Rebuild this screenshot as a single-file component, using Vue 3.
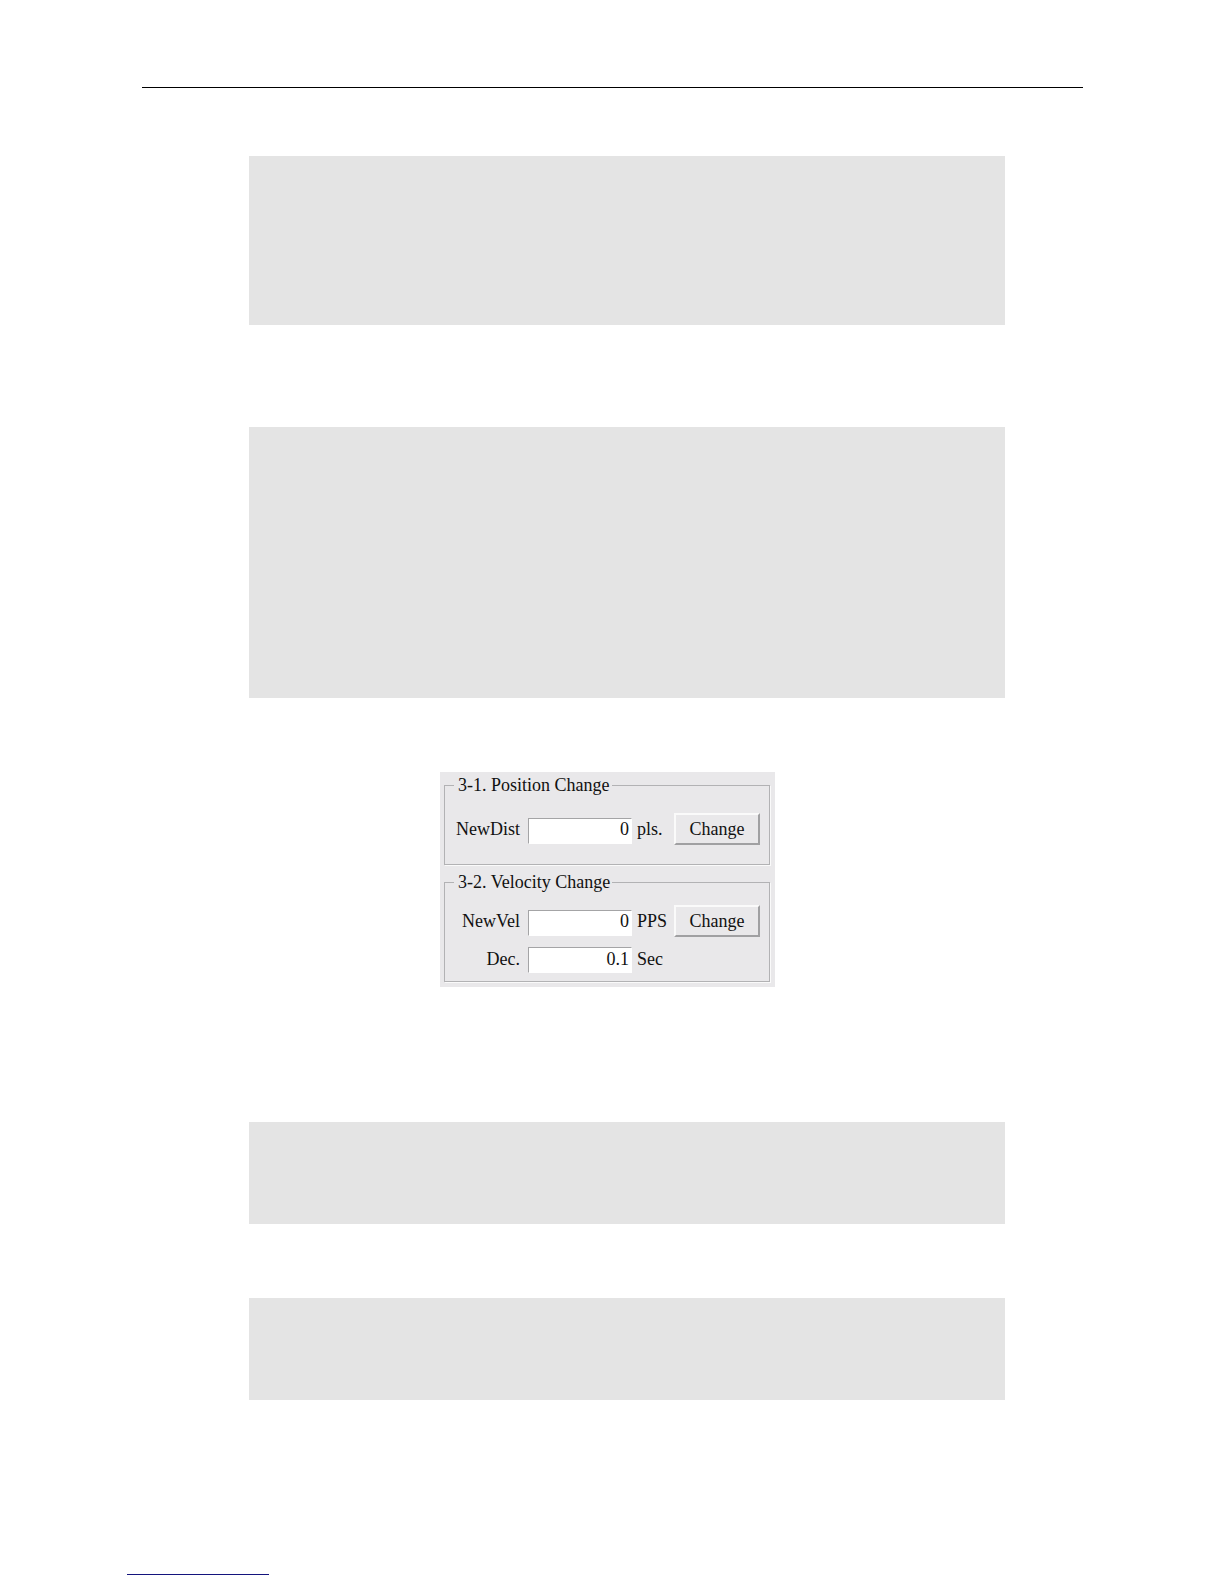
<template>
  <div class="page">
    <header class="page-head"></header>

    <main class="content">
      <section class="code-block medium"></section>
      <section class="code-block large"></section>

      <form class="panel" @submit.prevent>
        <fieldset class="group">
          <legend>3-1. Position Change</legend>
          <div class="row">
            <label for="new-dist">NewDist</label>
            <input id="new-dist" v-model="newDist" type="text" />
            <span class="unit">pls.</span>
            <button type="button">Change</button>
          </div>
        </fieldset>
        <fieldset class="group velocity">
          <legend>3-2. Velocity Change</legend>
          <div class="row">
            <label for="new-vel">NewVel</label>
            <input id="new-vel" v-model="newVel" type="text" />
            <span class="unit">PPS</span>
            <button type="button">Change</button>
          </div>
          <div class="row">
            <label for="dec">Dec.</label>
            <input id="dec" v-model="dec" type="text" />
            <span class="unit">Sec</span>
          </div>
        </fieldset>
      </form>

      <section class="code-block small"></section>
      <section class="code-block small last"></section>
    </main>

    <footer class="page-foot"></footer>
  </div>
</template>

<script setup>
import { ref } from 'vue'

const newDist = ref('0')
const newVel = ref('0')
const dec = ref('0.1')
</script>

<style>
body { margin: 0; background: #fff; }
</style>

<style scoped>
.page {
  display: flex; flex-direction: column;
  padding-top: 87px;
  font-family: "Liberation Serif", "Times New Roman", serif;
  font-size: 18px; line-height: 22px; color: #111;
}
.page-head { margin: 0 141px 0 142px; border-top: 1px solid #000; }
.content { display: flex; flex-direction: column; padding: 68px 219px 0 249px; }

.code-block { background: #e4e4e4; }
.medium { height: 169px; margin-bottom: 102px; }
.large { height: 271px; margin-bottom: 74px; }
.small { height: 102px; margin-bottom: 74px; }
.last { margin-bottom: 0; }

.panel {
  box-sizing: border-box; width: 335px;
  display: flex; flex-direction: column; gap: 6px;
  align-self: center;
  margin: 0 39px 135px 0; padding: 2px 5px 5px 4px;
  background: #e9e8ea;
}
.group {
  min-width: 0; margin: 0; padding: 17px 0 19px;
  border: 1px solid #b2b2b4;
  box-shadow: 1px 1px #fafafa;
}
.velocity { padding: 12px 0 8px; }
.group legend { margin-left: 9px; padding: 0 2px 0 4px; background: #e9e8ea; }

.row {
  display: grid; grid-template-columns: 83px 104px 42px 86px;
  align-items: baseline;
}
.row + .row { margin-top: 10px; }
.row label { padding-right: 8px; text-align: right; }
.row input {
  box-sizing: border-box; width: 100%; height: 26px; margin: 0; padding: 0 2px 2px 0;
  border: 1px solid #fff; border-top-color: #a4a4a6; border-left-color: #a4a4a6;
  border-radius: 0; background: #fff; outline: none;
  font: inherit; color: inherit; text-align: right;
}
.unit { padding-left: 5px; }
.row button {
  box-sizing: border-box; height: 32px; margin: 0; padding: 0;
  border: 2px solid; border-color: #fafafa #a0a0a2 #a0a0a2 #fafafa;
  border-radius: 0; background: #e9e8ea;
  font: inherit; color: inherit; cursor: pointer;
}

.page-foot { width: 142px; margin: 174px 0 0 127px; border-top: 1px solid #14147d; }
</style>
